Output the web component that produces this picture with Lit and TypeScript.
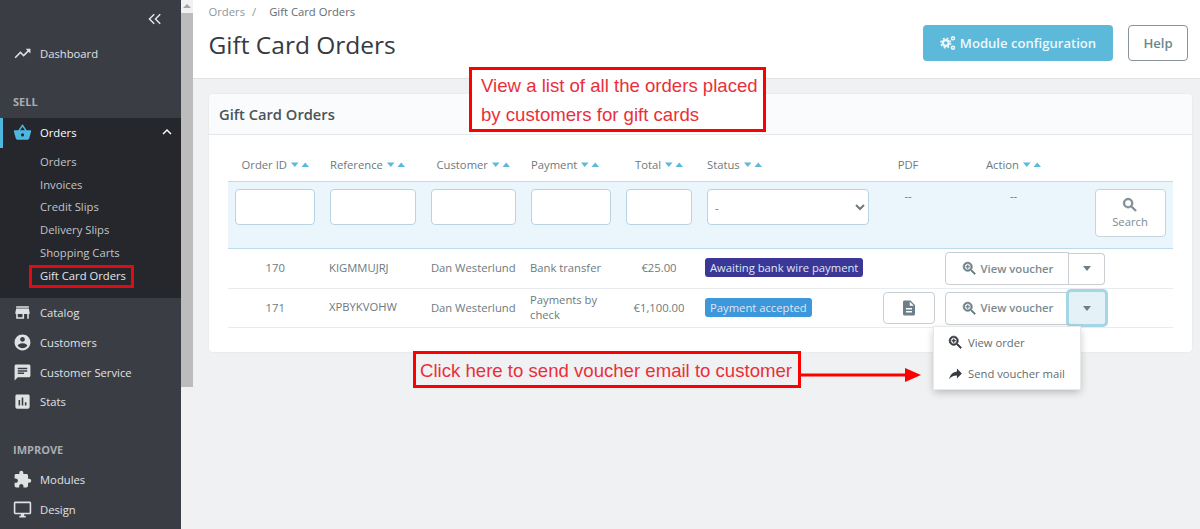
import { LitElement, html, css, svg } from "lit";
import { customElement } from "lit/decorators.js";

const P: Record<string, string> = {
  trend: "M16 6l2.29 2.29-4.88 4.88-4-4L2 16.59 3.41 18l6-6 4 4 6.3-6.29L22 12V6z",
  basket: "M17.21 9l-4.38-6.56c-.19-.28-.51-.42-.83-.42-.32 0-.64.14-.83.43L6.79 9H2c-.55 0-1 .45-1 1 0 .09.01.18.04.27l2.54 9.27c.23.84 1 1.46 1.92 1.46h13c.92 0 1.69-.62 1.93-1.46l2.54-9.27L23 10c0-.55-.45-1-1-1h-4.79zM9 9l3-4.4L15 9H9zm3 8c-1.1 0-2-.9-2-2s.9-2 2-2 2 .9 2 2-.9 2-2 2z",
  store: "M20 4H4v2h16V4zm1 10v-2l-1-5H4l-1 5v2h1v6h10v-6h4v6h2v-6h1zm-9 4H6v-4h6v4z",
  user: "M12 2C6.48 2 2 6.48 2 12s4.48 10 10 10 10-4.48 10-10S17.52 2 12 2zm0 3c1.66 0 3 1.34 3 3s-1.34 3-3 3-3-1.34-3-3 1.34-3 3-3zm0 14.2c-2.5 0-4.71-1.28-6-3.22.03-1.99 4-3.08 6-3.08 1.99 0 5.97 1.09 6 3.08-1.29 1.94-3.5 3.22-6 3.22z",
  chat: "M20 2H4c-1.1 0-1.99.9-1.99 2L2 22l4-4h14c1.1 0 2-.9 2-2V4c0-1.1-.9-2-2-2zM6 9h12v2H6V9zm8 5H6v-2h8v2zm4-6H6V6h12v2z",
  stats: "M19 3H5c-1.1 0-2 .9-2 2v14c0 1.1.9 2 2 2h14c1.1 0 2-.9 2-2V5c0-1.1-.9-2-2-2zM9 17H7v-7h2v7zm4 0h-2V7h2v10zm4 0h-2v-4h2v4z",
  puzzle: "M20.5 11H19V7c0-1.1-.9-2-2-2h-4V3.5C13 2.12 11.88 1 10.5 1S8 2.12 8 3.5V5H4c-1.1 0-1.99.9-1.99 2v3.8H3.5c1.49 0 2.7 1.21 2.7 2.7s-1.21 2.7-2.7 2.7H2V20c0 1.1.9 2 2 2h3.8v-1.5c0-1.49 1.21-2.7 2.7-2.7 1.49 0 2.7 1.21 2.7 2.7V22H17c1.1 0 2-.9 2-2v-4h1.5c1.38 0 2.5-1.12 2.5-2.5S21.88 11 20.5 11z",
  desktop: "M21 2H3c-1.1 0-2 .9-2 2v12c0 1.1.9 2 2 2h7v2H8v2h8v-2h-2v-2h7c1.1 0 2-.9 2-2V4c0-1.1-.9-2-2-2zm0 14H3V4h18v12z",
  zoom: "M15.5 14h-.79l-.28-.27A6.47 6.47 0 0 0 16 9.5 6.5 6.5 0 1 0 9.5 16c1.61 0 3.09-.59 4.23-1.57l.27.28v.79l5 4.99L20.49 19l-4.99-5zm-6 0C7.01 14 5 11.99 5 9.5S7.01 5 9.5 5 14 7.01 14 9.5 11.99 14 9.5 14zM12 10h-2v2H9v-2H7V9h2V7h1v2h2v1z",
  search: "M15.5 14h-.79l-.28-.27A6.47 6.47 0 0 0 16 9.5 6.5 6.5 0 1 0 9.5 16c1.61 0 3.09-.59 4.23-1.57l.27.28v.79l5 4.99L20.49 19l-4.99-5zm-6 0C7.01 14 5 11.99 5 9.5S7.01 5 9.5 5 14 7.01 14 9.5 11.99 14 9.5 14z",
  doc: "M14 2H6c-1.1 0-2 .9-2 2v16c0 1.1.9 2 2 2h12c1.1 0 2-.9 2-2V8l-6-6zm2 16H8v-2h8v2zm0-4H8v-2h8v2zm-3-5V3.5L18.5 9H13z",
  share: "M14 9V5l7 7-7 7v-4.1c-5 0-8.5 1.6-11 5.1 1-5 4-10 11-11z",
  up: "M7.41 15.41L12 10.83l4.59 4.58L18 14l-6-6-6 6z",
  dbl: "M11.7 6.3L10.3 4.9 3.2 12l7.1 7.1 1.4-1.4L6 12zM19.7 6.3l-1.4-1.4-7.1 7.1 7.1 7.1 1.4-1.4L14 12z",
};

const icon = (n: string, s: number, cls = "") =>
  html`<svg class="ic ${cls}" width=${s} height=${s} viewBox="0 0 24 24" fill="currentColor">${svg`<path d=${P[n]}></path>`}</svg>`;

const sort = html`<svg class="sort" width="18" height="6" viewBox="0 0 18 6" fill="currentColor"><path d="M0 .5h7.5L3.75 5zM10.5 5h7.5L14.25 .5z"></path></svg>`;

const gears = html`<svg width="16" height="16" viewBox="0 0 16 16" fill="none" stroke="currentColor"><circle cx="5.8" cy="8" r="2.9" stroke-width="2.2"></circle><circle cx="5.8" cy="8" r="4.8" stroke-width="1.6" stroke-dasharray="1.9 1.9"></circle><circle cx="13" cy="3.2" r="1.5" stroke-width="1.5"></circle><circle cx="13" cy="12.8" r="1.5" stroke-width="1.5"></circle></svg>`;

const head: [string, string, boolean][] = [
  ["Order ID", "c", true], ["Reference", "l", true], ["Customer", "c", true], ["Payment", "l", true],
  ["Total", "c", true], ["Status", "l", true], ["PDF", "c", false], ["Action", "c", true], ["", "c", false],
];

const rows = [
  { id: "170", ref: "KIGMMUJRJ", cust: "Dan Westerlund", pay: "Bank transfer", total: "€25.00", st: "Awaiting bank wire payment", col: "#3b3796", pdf: false, open: false },
  { id: "171", ref: "XPBYKVOHW", cust: "Dan Westerlund", pay: "Payments by check", total: "€1,100.00", st: "Payment accepted", col: "#3d97db", pdf: true, open: true },
];

@customElement("app-root")
export class AppRoot extends LitElement {
  static styles = css`
    :host { display: block; width: 1200px; height: 529px; overflow: hidden; position: relative; font-family: "Open Sans", sans-serif; font-size: 11.25px; color: #6c7a80; background: #eff1f2; }
    * { box-sizing: border-box; }
    .ic { display: block; flex: none; }
    .page { display: flex; height: 529px; }

    .side { width: 181px; flex: none; height: 529px; background: #3a3d44; color: #dfe1e3; display: flex; flex-direction: column; overflow: hidden; }
    .collapse { height: 38px; padding: 10px 17px 0 0; display: flex; justify-content: flex-end; color: #e4e6e8; }
    .item { height: 29.7px; display: flex; align-items: center; padding-left: 13px; gap: 8px; flex: none; }
    .dash { height: 30px; padding-bottom: 1px; margin-top: 1px; }
    .item .lbl { color: #e0e2e4; }
    .sec { height: 20px; margin-top: 23px; margin-bottom: 5px; padding-left: 13px; font-size: 11px; font-weight: 700; color: #a9adb1; display: flex; align-items: center; flex: none; }
    .sec.first { margin-top: 22px; margin-bottom: 7px; }
    .active { background: #25272c; height: 180px; flex: none; }
    .active .top { height: 30px; padding-bottom: 2px; display: flex; align-items: center; padding-left: 13px; gap: 8px; position: relative; color: #fff; }
    .active .top::before { content: ""; position: absolute; left: 0; top: 0; bottom: 0; width: 3px; background: #4fb7df; }
    .active .top .ic:first-of-type { color: #4fb7df; }
    .active .chev { margin-left: auto; margin-right: 5px; color: #fff; }
    .subs { padding-top: 2px; }
    .sub { height: 22.8px; padding-left: 40px; display: flex; align-items: center; color: #c2c5c8; }

    .bar { width: 12px; flex: none; background: #f1f1f1; display: flex; flex-direction: column; }
    .bar .arrow { height: 13px; display: flex; justify-content: center; padding-top: 4px; }
    .bar .arrow i { display: block; width: 0; height: 0; border: 4px solid transparent; border-top: 0; border-bottom: 4px solid #a3a3a3; }
    .bar .thumb { height: 374px; background: #bcbcbc; }

    .main { flex: 1; min-width: 0; display: flex; flex-direction: column; }
    .hdr { height: 79px; flex: none; background: #fff; border-bottom: 1px solid #dfe3e5; padding: 0 12px 0 15.5px; display: flex; justify-content: space-between; }
    .crumb { display: flex; gap: 7px; height: 22px; align-items: center; color: #8b979c; }
    .crumb span:last-child { color: #5f6c72; margin-left: 6px; }
    h1 { margin: 7px 0 0; font-size: 24.5px; line-height: 32px; font-weight: 400; color: #363a41; }
    .btns { display: flex; gap: 15px; padding-top: 25px; }
    .btn-i { height: 36px; width: 190px; background: #5cb9da; border-radius: 4px; color: #eef8fb; display: flex; align-items: center; justify-content: center; gap: 4px; font-size: 13.1px; font-weight: 600; }
    .btn-h { height: 36px; width: 60px; border: 1px solid #8a9398; border-radius: 4px; background: #fff; color: #6c868e; display: flex; align-items: center; justify-content: center; font-size: 13.1px; font-weight: 600; }

    .card { margin: 15px 8px 0 16px; height: 258px; background: #fff; border-radius: 4px; box-shadow: 0 0 2px rgba(0,0,0,.08); }
    .card-h { height: 41px; background: #fafbfc; border-bottom: 1px solid #e4e8ea; padding-left: 10px; display: flex; align-items: center; font-size: 14.7px; font-weight: 600; color: #4a5358; border-radius: 4px 4px 0 0; }
    .tbl { padding: 14px 19px 0; }
    .g { display: grid; grid-template-columns: 94.5px 100.5px 100.5px 95px 81px 176.5px 64px 147px 86px; align-items: center; }
    .th { height: 32px; }
    .th > div { display: flex; align-items: center; gap: 4px; }
    .th span { margin-bottom: 2px; }
    .th .c { justify-content: center; }
    .th .l { padding-left: 7.5px; }
    .sort { color: #5cb9da; flex: none; }
    .flt { height: 68px; align-items: start; background: #ebf6fc; border-top: 1px solid #bcdcec; border-bottom: 1px solid #bcdcec; padding-top: 7px; }
    .flt > div { padding: 0 7.5px; }
    .flt > div:first-child { padding-left: 7px; }
    .flt input, .flt select { display: block; width: 100%; height: 36px; border: 1px solid #b9d3e2; border-radius: 4px; background: #fff; font: inherit; color: #6c7a80; padding: 0 3px; margin: 0; }
    .dash2 { text-align: center; line-height: 14px; }
    .sbtn { height: 48px; padding-bottom: 2px; border: 1px solid #c6d4dc; border-radius: 4px; background: #fff; display: flex; flex-direction: column; align-items: center; justify-content: center; color: #7c8b92; }
    .r { border-bottom: 1px solid #e8ecee; }
    .r.a { height: 40px; }
    .r.b { height: 39px; }
    .r .c { text-align: center; padding-bottom: 2px; }
    .r .l { padding-left: 6.5px; padding-bottom: 2px; line-height: 15.5px; }
    .r .s { padding-left: 5.5px; padding-bottom: 2px; }
    .badge { display: inline-block; height: 19px; line-height: 19px; padding: 0 5px; border-radius: 3px; color: #dfe6f5; }
    .pdf { margin-left: 7px; width: 52px; height: 32px; border: 1px solid #c8ced1; border-radius: 4px; display: flex; align-items: center; justify-content: center; color: #6c7f88; background: #fff; }
    .act { grid-column: span 2; padding-left: 5px; display: flex; align-items: center; }
    .vv { width: 124px; height: 33px; border: 1px solid #c8ced1; border-radius: 4px 0 0 4px; display: flex; align-items: center; justify-content: center; gap: 3px; color: #7c8b92; font-weight: 600; background: #fff; }
    .vv span { margin-bottom: 1px; }
    .vv .ic, .mi .ic.zm { stroke: currentColor; stroke-width: 1; }
    .vv .ic { color: #6c7f88; }
    .sbtn .ic { stroke: currentColor; stroke-width: 1; }
    .car { width: 36px; height: 32px; border: 1px solid #c8ced1; border-left: 0; border-radius: 0 4px 4px 0; display: flex; align-items: center; justify-content: center; background: #fff; position: relative; }
    .car i { display: block; width: 0; height: 0; border: 4.5px solid transparent; border-bottom: 0; border-top: 5px solid #6c7f88; }
    .car.on { background: #e4f1f6; box-shadow: 0 0 0 3px #a5d6e6; border: 0; border-radius: 2px; }

    .menu { position: absolute; left: 934px; top: 327px; width: 146px; height: 62px; background: #fff; box-shadow: 0 0 0 1px #e6e8ea, 0 3px 8px rgba(0,0,0,.25); }
    .mi { height: 31px; display: flex; align-items: center; gap: 4px; padding-left: 13px; color: #5f6c72; }
    .mi .ic { color: #363a41; }

    .box { position: absolute; border: 3px solid #e00b14; pointer-events: none; }
    .b-side { left: 29px; top: 265px; width: 105px; height: 23px; }
    .note { position: absolute; border: 3px solid #f00; background: #fff; font-family: "Liberation Sans", Arial, sans-serif; color: #e9303a; font-size: 18.6px; }
    .n1 { left: 469px; top: 67px; width: 297px; height: 65px; padding: 1px 0 0 9px; line-height: 29px; }
    .n2 { left: 413px; top: 351px; width: 388px; height: 37px; background: #f0f1f2; padding-left: 4px; line-height: 34px; white-space: nowrap; }
    .arrow2 { position: absolute; left: 801px; top: 367px; display: block; }
  `;

  render() {
    return html`
      <div class="page">
        <nav class="side">
          <div class="collapse">${icon("dbl", 18)}</div>
          <div class="item dash">${icon("trend", 19)}<span class="lbl">Dashboard</span></div>
          <div class="sec first">SELL</div>
          <div class="active">
            <div class="top">${icon("basket", 19)}<span>Orders</span>${icon("up", 18, "chev")}</div>
            <div class="subs">
              ${["Orders", "Invoices", "Credit Slips", "Delivery Slips", "Shopping Carts", "Gift Card Orders"].map(
                (s) => html`<div class="sub" style=${s.startsWith("Gift") ? "color:#e4e6e8" : ""}>${s}</div>`
              )}
            </div>
          </div>
          ${[["store", "Catalog"], ["user", "Customers"], ["chat", "Customer Service"], ["stats", "Stats"]].map(
            ([i, t]) => html`<div class="item">${icon(i, 19)}<span class="lbl">${t}</span></div>`
          )}
          <div class="sec">IMPROVE</div>
          ${[["puzzle", "Modules"], ["desktop", "Design"]].map(
            ([i, t]) => html`<div class="item">${icon(i, 19)}<span class="lbl">${t}</span></div>`
          )}
        </nav>
        <div class="bar"><div class="arrow"><i></i></div><div class="thumb"></div></div>
        <main class="main">
          <header class="hdr">
            <div>
              <div class="crumb"><span>Orders</span><span>/</span><span>Gift Card Orders</span></div>
              <h1>Gift Card Orders</h1>
            </div>
            <div class="btns">
              <div class="btn-i">${gears}<span>Module configuration</span></div>
              <div class="btn-h">Help</div>
            </div>
          </header>
          <section class="card">
            <div class="card-h">Gift Card Orders</div>
            <div class="tbl">
              <div class="g th">
                ${head.map(([t, a, s]) => html`<div class=${a}>${t ? html`<span>${t}</span>` : ""}${s ? sort : ""}</div>`)}
              </div>
              <div class="g flt">
                ${[0, 1, 2, 3, 4].map(() => html`<div><input type="text" /></div>`)}
                <div><select><option>-</option></select></div>
                <div class="dash2">--</div>
                <div class="dash2">--</div>
                <div><div class="sbtn">${icon("search", 18)}<span>Search</span></div></div>
              </div>
              ${rows.map(
                (r, i) => html`
                  <div class="g r ${i ? "b" : "a"}">
                    <div class="c">${r.id}</div>
                    <div class="l">${r.ref}</div>
                    <div class="c">${r.cust}</div>
                    <div class="l">${r.pay}</div>
                    <div class="c">${r.total}</div>
                    <div class="s"><span class="badge" style="background:${r.col}">${r.st}</span></div>
                    <div>${r.pdf ? html`<div class="pdf">${icon("doc", 18)}</div>` : ""}</div>
                    <div class="act">
                      <div class="vv">${icon("zoom", 17)}<span>View voucher</span></div>
                      <div class="car ${r.open ? "on" : ""}"><i></i></div>
                    </div>
                  </div>
                `
              )}
            </div>
          </section>
        </main>
      </div>

      <div class="box b-side"></div>
      <div class="note n1">View a list of all the orders placed<br />by customers for gift cards</div>
      <div class="note n2">Click here to send voucher email to customer</div>
      <svg class="arrow2" width="122" height="16" viewBox="0 0 122 16"><path d="M0 6.5h104v3H0z" fill="#f00"></path><path d="M104 1l16 7-16 7z" fill="#f00"></path></svg>
      <div class="menu">
        <div class="mi">${icon("zoom", 17, "zm")}<span>View order</span></div>
        <div class="mi">${icon("share", 17)}<span>Send voucher mail</span></div>
      </div>
    `;
  }
}
